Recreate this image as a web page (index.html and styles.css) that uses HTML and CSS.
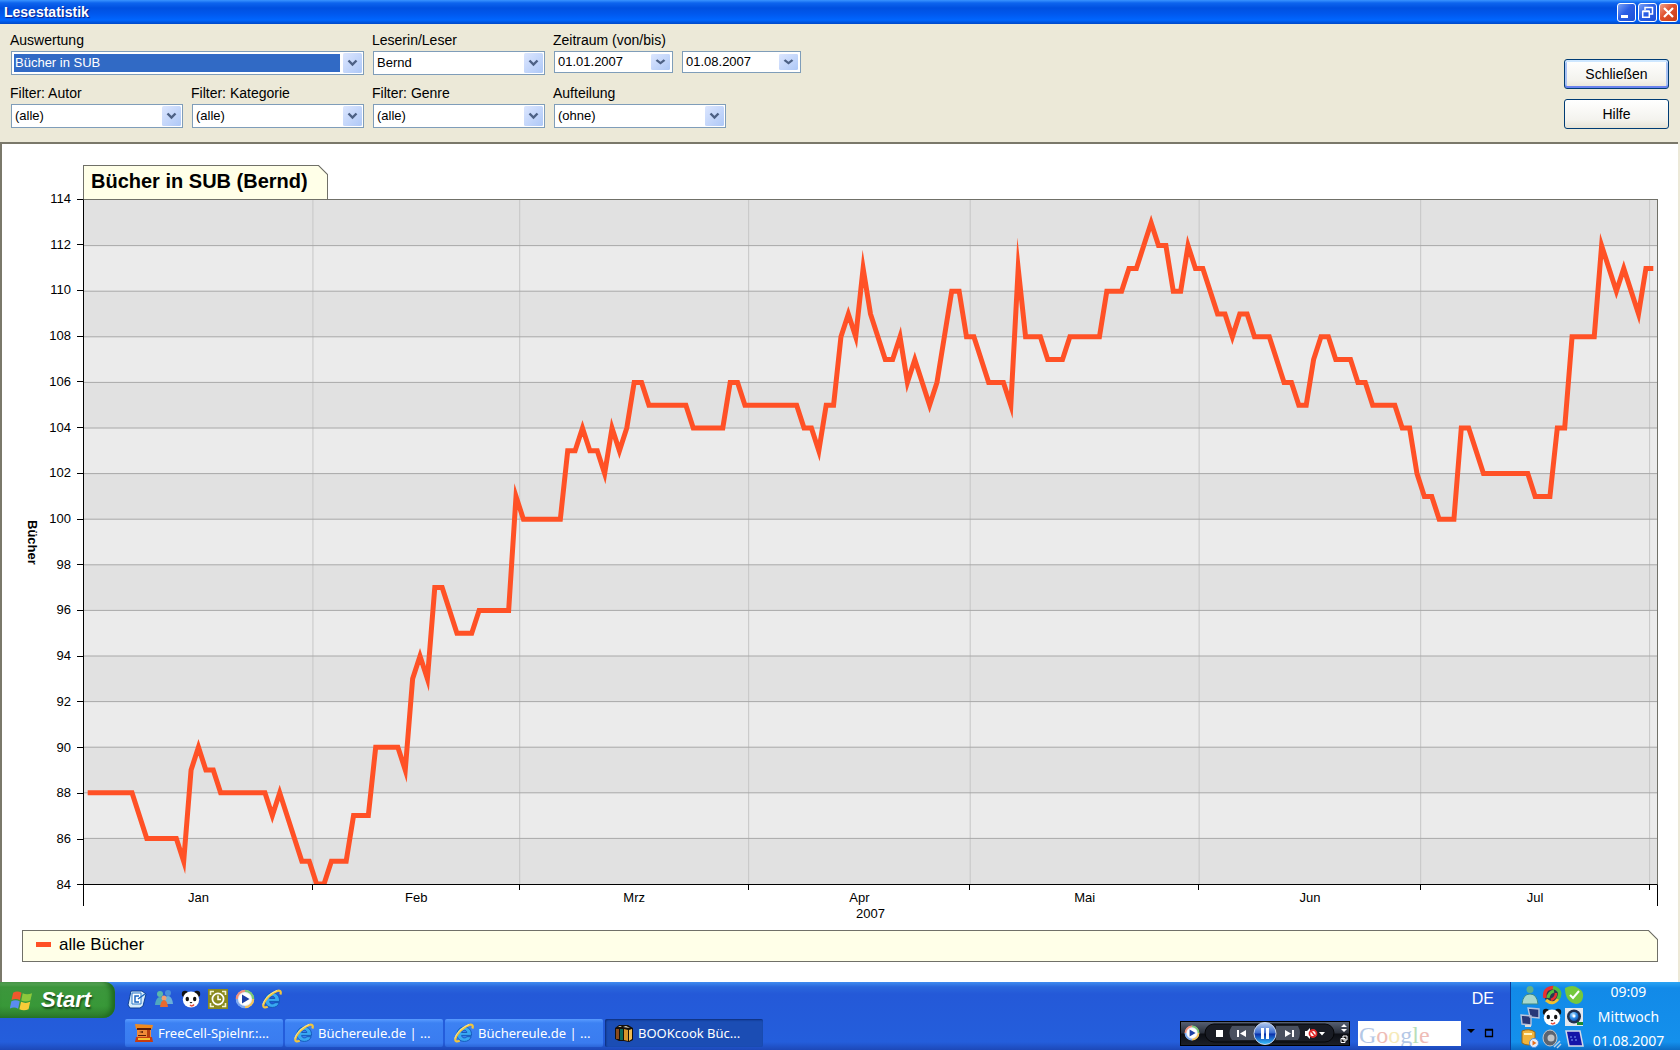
FILE: index.html
```html
<!DOCTYPE html>
<html lang="de">
<head>
<meta charset="utf-8">
<title>Lesestatistik</title>
<link rel="stylesheet" href="styles.css">
</head>
<body>
<svg class="defs" width="0" height="0" aria-hidden="true">
  <defs>
    <radialGradient id="blueBall" cx=".4" cy=".3" r=".8"><stop offset="0" stop-color="#bfe6ff"/><stop offset=".5" stop-color="#2f8fe8"/><stop offset="1" stop-color="#0a3f9c"/></radialGradient>
    <linearGradient id="pauseBall" x1="0" y1="0" x2="0" y2="1"><stop offset="0" stop-color="#b4ccf0"/><stop offset=".48" stop-color="#3b6cd0"/><stop offset=".52" stop-color="#0b2fa8"/><stop offset="1" stop-color="#38c4ff"/></linearGradient>
    <symbol id="ie" viewBox="0 0 20 20">
      <path d="M17.500 12.400H7.600c.3 1.700 1.300 2.500 2.800 2.500 1.200 0 2-.4 2.500-1.200h4.300c-1 3-3.500 4.700-6.800 4.700-4.400 0-7.400-2.800-7.400-7.100 0-4.300 3-7.300 7.300-7.300 4.700 0 7.400 3.200 7.200 8.400zM7.600 9.500h5.300c-.2-1.400-1.200-2.200-2.600-2.200s-2.400.8-2.700 2.200z" fill="#39a9f2" stroke="#0d4fae" stroke-width=".8"/>
      <path d="M18.300 5.500C19.600 2.300 18 .8 14.500 2.200 8.500 4.600 2.500 11 1.400 15.500c-.7 3 1.300 3.600 4.300 2.200" fill="none" stroke="#f2c53d" stroke-width="2.200"/>
      <path d="M15 1.600C8.500 3.600 1.800 10.400.8 15.500" fill="none" stroke="#fff3b0" stroke-width=".8"/>
    </symbol>
    <symbol id="panda" viewBox="0 0 20 20">
      <circle cx="4" cy="5" r="3.200" fill="#111"/><circle cx="16" cy="5" r="3.200" fill="#111"/>
      <ellipse cx="10" cy="10.500" rx="8.200" ry="8" fill="#fff"/>
      <ellipse cx="6.300" cy="10" rx="1.700" ry="2.200" fill="#111"/><ellipse cx="13.700" cy="10" rx="1.700" ry="2.200" fill="#111"/>
      <path d="M8.500 13h3l-1.500 1.500z" fill="#111"/><path d="M9 16q2 2 4-.5" stroke="#e84a3a" stroke-width="1.500" fill="none"/>
    </symbol>
    <symbol id="wmp" viewBox="0 0 20 20">
      <circle cx="10" cy="10" r="9" fill="#e8eef8"/>
      <path d="M10 1.800A8.200 8.200 0 0 0 1.800 10" stroke="#f0907a" stroke-width="2.200" fill="none"/>
      <path d="M10 1.800A8.200 8.200 0 0 1 18.200 10" stroke="#7cc874" stroke-width="2.200" fill="none"/>
      <path d="M18.200 10A8.200 8.200 0 0 1 10 18.200" stroke="#f3c35a" stroke-width="2.200" fill="none"/>
      <path d="M10 18.200A8.200 8.200 0 0 1 1.800 10" stroke="#7ca8ee" stroke-width="2.200" fill="none"/>
      <circle cx="10" cy="10" r="6" fill="#fff"/><path d="M7 5.500l7.500 4.500L7 14.500z" fill="#1c3fa4"/>
    </symbol>
  </defs>
</svg>

<header class="titlebar">
  <h1 class="titlebar-text">Lesestatistik</h1>
  <div class="window-buttons">
    <button class="winbtn" type="button" aria-label="Minimieren"><svg viewBox="0 0 17 17"><path d="M3 11h7v3H3z" fill="#fff"/></svg></button>
    <button class="winbtn" type="button" aria-label="Wiederherstellen"><svg viewBox="0 0 17 17"><path d="M6 6V3.500h7.500V10H11M5.500 3.500h8.500" fill="none" stroke="#fff" stroke-width="1.500"/><path d="M3.700 7.500h6.600v5.800H3.700zM3.500 7h7" fill="none" stroke="#fff" stroke-width="1.500"/></svg></button>
    <button class="winbtn winbtn-close" type="button" aria-label="Fenster schließen"><svg viewBox="0 0 17 17"><path d="M4 4l9 9M13 4l-9 9" stroke="#fff" stroke-width="2.200"/></svg></button>
  </div>
</header>

<form class="toolbar">
  <div class="filters">
    <div class="field field-wide">
      <label for="auswertung">Auswertung</label>
      <select id="auswertung" class="combo combo-active"><option>Bücher in SUB</option></select>
    </div>
    <div class="field">
      <label for="leser">Leserin/Leser</label>
      <select id="leser" class="combo"><option>Bernd</option></select>
    </div>
    <div class="field field-range">
      <label for="von">Zeitraum (von/bis)</label>
      <div class="range">
        <div class="date"><input id="von" type="text" value="01.01.2007"><button class="date-drop" type="button" aria-label="Kalender von"></button></div>
        <div class="date"><input id="bis" type="text" value="01.08.2007" aria-label="Zeitraum bis"><button class="date-drop" type="button" aria-label="Kalender bis"></button></div>
      </div>
    </div>
    <div class="field">
      <label for="autor">Filter: Autor</label>
      <select id="autor" class="combo"><option>(alle)</option></select>
    </div>
    <div class="field">
      <label for="kategorie">Filter: Kategorie</label>
      <select id="kategorie" class="combo"><option>(alle)</option></select>
    </div>
    <div class="field">
      <label for="genre">Filter: Genre</label>
      <select id="genre" class="combo"><option>(alle)</option></select>
    </div>
    <div class="field">
      <label for="aufteilung">Aufteilung</label>
      <select id="aufteilung" class="combo"><option>(ohne)</option></select>
    </div>
  </div>
  <div class="actions">
    <button class="btn btn-default" type="button">Schließen</button>
    <button class="btn" type="button">Hilfe</button>
  </div>
</form>

<main class="panel">
  <div class="chart">
    <h2 class="chart-title">Bücher in SUB (Bernd)</h2>
    <div class="y-title"><span>Bücher</span></div>
    <div class="y-axis">
      <span>114</span><span>112</span><span>110</span><span>108</span><span>106</span><span>104</span><span>102</span><span>100</span><span>98</span><span>96</span><span>94</span><span>92</span><span>90</span><span>88</span><span>86</span><span>84</span>
    </div>
    <div class="plot">
      <!-- one unit per day across, one unit per book down from 114 -->
      <svg class="plot-svg" viewBox="0 0 213 30" preserveAspectRatio="none">
        <path fill="#e1e1e1" d="M0 0h213v2H0zM0 4h213v2H0zM0 8h213v2H0zM0 12h213v2H0zM0 16h213v2H0zM0 20h213v2H0zM0 24h213v2H0zM0 28h213v2H0z"/>
        <path class="grid-v" d="M31 0v30M59 0v30M90 0v30M120 0v30M151 0v30M181 0v30M212 0v30"/>
        <path class="grid-h" d="M0 2h213M0 4h213M0 6h213M0 8h213M0 10h213M0 12h213M0 14h213M0 16h213M0 18h213M0 20h213M0 22h213M0 24h213M0 26h213M0 28h213"/>
        <polyline class="series" points="0.5,26 6.5,26 8.5,28 12.5,28 13.5,29 14.5,25 15.5,24 16.5,25 17.5,25 18.5,26 24.5,26 25.5,27 26.5,26 29.5,29 30.5,29 31.5,30 32.5,30 33.5,29 35.5,29 36.5,27 38.5,27 39.5,24 42.5,24 43.5,25 44.5,21 45.5,20 46.5,21 47.5,17 48.5,17 50.5,19 52.5,19 53.5,18 57.5,18 58.5,13 59.5,14 64.5,14 65.5,11 66.5,11 67.5,10 68.5,11 69.5,11 70.5,12 71.5,10 72.5,11 73.5,10 74.5,8 75.5,8 76.5,9 81.5,9 82.5,10 86.5,10 87.5,8 88.5,8 89.5,9 96.5,9 97.5,10 98.5,10 99.5,11 100.5,9 101.5,9 102.5,6 103.5,5 104.5,6 105.5,3 106.5,5 108.5,7 109.5,7 110.5,6 111.5,8 112.5,7 114.5,9 115.5,8 117.5,4 118.5,4 119.5,6 120.5,6 122.5,8 124.5,8 125.5,9 126.5,3 127.5,6 129.5,6 130.5,7 132.5,7 133.5,6 137.5,6 138.5,4 140.5,4 141.5,3 142.5,3 144.5,1 145.5,2 146.5,2 147.5,4 148.5,4 149.5,2 150.5,3 151.5,3 153.5,5 154.5,5 155.5,6 156.5,5 157.5,5 158.5,6 160.5,6 162.5,8 163.5,8 164.5,9 165.5,9 166.5,7 167.5,6 168.5,6 169.5,7 171.5,7 172.5,8 173.5,8 174.5,9 177.5,9 178.5,10 179.5,10 180.5,12 181.5,13 182.5,13 183.5,14 185.5,14 186.5,10 187.5,10 189.5,12 195.5,12 196.5,13 198.5,13 199.5,10 200.5,10 201.5,6 204.5,6 205.5,2 207.5,4 208.5,3 210.5,5 211.5,3 212.5,3"/>
      </svg>
    </div>
    <div class="x-axis">
      <div class="months"><span>Jan</span><span>Feb</span><span>Mrz</span><span>Apr</span><span>Mai</span><span>Jun</span><span>Jul</span><span></span></div>
      <div class="year">2007</div>
    </div>
    <div class="legend"><span class="legend-key"></span>alle Bücher</div>
  </div>
</main>

<footer class="taskbar">
  <button class="start" type="button">
    <svg viewBox="0 0 24 24"><path d="M3 4.500q4-2.500 8 0L9.500 11.500q-4-2-8 0z" fill="#f0582c"/><path d="M12.200 5q4 2.200 9 0l-1.600 7q-4.500 2-8.800 0z" fill="#8cc83c"/><path d="M1.300 12.800q4-2 8 0l-1.500 7q-4-2.200-8 0z" fill="#5a8cf0"/><path d="M10.600 13.300q4.500 2 8.800 0l-1.600 7q-4.400 2-8.800 0z" fill="#f8cc38"/></svg>
    <span>Start</span>
  </button>
  <div class="bands">
    <nav class="quick" aria-label="Schnellstart">
      <a href="#" aria-label="Desktop"><svg viewBox="0 0 20 20"><path d="M4 2h11l4 3-3 12-3 2H3l-2-3z" fill="#d8ecfa" stroke="#0d3f94"/><path d="M5 4h9v11H5z" fill="#fff" stroke="#2b78c8"/><path d="M12 7H8v6h4M11 10l7-5" fill="none" stroke="#1a66c0" stroke-width="1.500"/></svg></a>
      <a href="#" aria-label="Messenger"><svg viewBox="0 0 20 20"><circle cx="6" cy="5" r="3" fill="#5cb8a8"/><circle cx="14" cy="4" r="3" fill="#4a90d8"/><path d="M1 16q1-8 5-8t5 8z" fill="#4fa8c0"/><path d="M9 15q1-8 5-8t5 8z" fill="#6ab0d8"/><circle cx="10" cy="9" r="2.500" fill="#f0a070"/><path d="M6 18q1-7 4-7t4 7z" fill="#e86a30"/></svg></a>
      <a href="#" aria-label="Panda"><svg><use href="#panda"/></svg></a>
      <a href="#" aria-label="Uhr"><svg viewBox="0 0 20 20"><path d="M0 0h20v20H0z" fill="#8a8a1e"/><path d="M2.500 6V2.500H6M14 2.500h3.500V6M17.500 14v3.500H14M6 17.500H2.500V14" fill="none" stroke="#f4f4d0" stroke-width="1.600"/><circle cx="10" cy="10" r="5.600" fill="none" stroke="#fff" stroke-width="1.700"/><path d="M10 6.500V10.500h3" fill="none" stroke="#fff" stroke-width="1.500"/></svg></a>
      <a href="#" aria-label="Media Player"><svg><use href="#wmp"/></svg></a>
      <a href="#" aria-label="Internet Explorer"><svg><use href="#ie"/></svg></a>
      <span class="lang">DE</span>
    </nav>
    <div class="tasks">
      <button class="task" type="button"><svg viewBox="0 0 20 20"><path d="M1 1l18 1-1 4H2z" fill="#f08a20"/><path d="M3 6h14v8H3z" fill="#f08a38"/><path d="M3 5h14v2H3zM5 9l4-1v2zM4 12h8v1H4z" fill="#5a1c08"/><path d="M13 7h3v7h-3z" fill="#b43c10"/><path d="M2 14h16l1 5H1z" fill="#c83c10"/><path d="M4 15h12v2H4z" fill="#f6c030"/></svg><span>FreeCell-Spielnr.:...</span></button>
      <button class="task" type="button"><svg><use href="#ie"/></svg><span>Büchereule.de | ...</span></button>
      <button class="task" type="button"><svg><use href="#ie"/></svg><span>Büchereule.de | ...</span></button>
      <button class="task task-active" type="button"><svg viewBox="0 0 20 20"><path d="M1 5l4-3h9l5 3v12l-4 2-5-1-5 0-4-2z" fill="#15100a"/><path d="M2 6h3v10H2z" fill="#8a4a1c"/><path d="M6 6h3v11H6z" fill="#0d6a5a"/><path d="M10 6l4 1v11l-4-1z" fill="#d8962c"/><path d="M15 7l3-1v10l-3 2z" fill="#f0bc50"/><path d="M4 4l2-1 2 1zM9 4l3-1 4 2z" fill="#e8e0d0"/></svg><span>BOOKcook Büc...</span></button>
      <div class="player">
        <svg viewBox="0 0 170 25" role="img" aria-label="Windows Media Player">
          <linearGradient id="pl" x1="0" y1="0" x2="0" y2="1"><stop offset="0" stop-color="#566072"/><stop offset=".48" stop-color="#2a2f3a"/><stop offset=".52" stop-color="#0c0e14"/><stop offset="1" stop-color="#1c2028"/></linearGradient>
          <path d="M0 0h170v25H0z" fill="#000"/><path d="M1 1h168v23H1z" fill="url(#pl)"/>
          <svg x="4" y="4" width="16" height="16"><use href="#wmp"/></svg>
          <rect x="25" y="3" width="129" height="18" rx="9" fill="#191c24" stroke="#050608"/>
          <path d="M52 5h23v14H52q-5-7 0-14zM96 5h22q4 7 0 14H96z" fill="#4a5160"/>
          <path d="M36 9h7v7h-7zM57 9h2v7h-2zM66 9v7l-6-3.500zM105 9v7l6-3.500zM112 9h2v7h-2z" fill="#fff"/>
          <circle cx="85" cy="12.500" r="11" fill="url(#pauseBall)" stroke="#c8d4ec"/>
          <path d="M81 7h3v11h-3zM86 7h3v11h-3z" fill="#fff"/>
          <path d="M125 10h2l3-3v11l-3-3h-2z" fill="#fff"/><circle cx="133" cy="12.500" r="3.500" fill="#fff" stroke="#e02828" stroke-width="1.800"/><path d="M131 10l4 5" stroke="#e02828" stroke-width="1.500"/>
          <path d="M139 11h6l-3 3.500zM161 6l3-3 3 3zM161 8l3 3 3-3z" fill="#fff"/>
          <path d="M163 19v-4h4v4zM161 21.500v-4h4v4z" fill="#111" stroke="#fff"/>
        </svg>
      </div>
      <div class="search">
        <label class="google" for="google"><i class="g-blue">G</i><i class="g-red">o</i><i class="g-yellow">o</i><i class="g-blue">g</i><i class="g-green">l</i><i class="g-red">e</i></label>
        <input id="google" type="text">
      </div>
      <button class="mini" type="button" aria-label="Suchoptionen"><svg viewBox="0 0 10 10"><path d="M1 1h8L5 5z"/></svg></button>
      <button class="mini" type="button" aria-label="Fenster"><svg viewBox="0 0 10 10"><path d="M1.500 2h7v6.500h-7zM1 1.500h8" fill="none" stroke="#000" stroke-width="1.300"/></svg></button>
    </div>
  </div>
  <div class="tray">
    <div class="tray-icons">
      <svg viewBox="0 0 20 20"><circle cx="10" cy="4.500" r="3.500" fill="#5fb08a"/><path d="M2 19q1-10 8-10t8 10z" fill="#a8d8cc" stroke="#3a8a88"/></svg>
      <svg viewBox="0 0 20 20"><circle cx="10" cy="10" r="8" fill="#2a3a50"/><path d="M3 13Q1 3 12 2.500" stroke="#e83030" stroke-width="3.500" fill="none"/><path d="M11 2.500Q21 5 16 14" stroke="#50c040" stroke-width="3.500" fill="none"/><path d="M4 15q7 6 12-1" stroke="#f0c030" stroke-width="3" fill="none"/><path d="M6 13Q7 7 12 6" stroke="#50c040" stroke-width="3" fill="none"/><path d="M9 15q5-2 5-7" stroke="#e83030" stroke-width="2.500" fill="none"/></svg>
      <svg viewBox="0 0 20 20"><path d="M1 3q8-4 13 0 6 3 5 9-1 7-7 7Q1 17 1 3z" fill="#74c83c"/><path d="M6 10l3 3 6-7" fill="none" stroke="#fff" stroke-width="2"/></svg>
      <svg viewBox="0 0 20 20"><path d="M8 1l11 1v9l-9-1zM1 8l10 1v9L2 17z" fill="#283878" stroke="#b8c4dc" stroke-width="1.400"/><path d="M5 19h6" stroke="#ddd" stroke-width="2"/></svg>
      <svg><use href="#panda"/></svg>
      <svg viewBox="0 0 20 20"><path d="M1 1h18v18H1z" fill="#e4e8ee"/><circle cx="10" cy="9.500" r="7" fill="#203050"/><circle cx="10" cy="9.500" r="4.500" fill="url(#blueBall)"/><circle cx="10" cy="9" r="1.500" fill="#fff"/><path d="M13 15h6v3h-6z" fill="#1c8a30"/></svg>
      <svg viewBox="0 0 20 20"><path d="M2 2q7-3 13 1v11q-7 4-13 0z" fill="#f0b43c" stroke="#9a6818"/><path d="M4 5h8" stroke="#fff4c0" stroke-width="2"/><circle cx="14" cy="14" r="4.500" fill="#e8eef8" stroke="#4c8ee8"/><path d="M12.500 11.500l4 2.500-4 2.500z" fill="#e87020"/></svg>
      <svg viewBox="0 0 20 20"><ellipse cx="8" cy="9" rx="7" ry="8" fill="#5c6470" stroke="#c4c8cc"/><circle cx="9" cy="9" r="3.500" fill="#c0c4c8"/><path d="M12 18l6-6M15 19l4-4" stroke="#b8d0e8" stroke-width="1.500"/></svg>
      <svg viewBox="0 0 20 20"><path d="M2 2h14l3 15H5z" fill="#1414a8" stroke="#d4d8e8" stroke-width="1.500"/><path d="M6 8h8M7 11h8" stroke="#7ca0f8" stroke-dasharray="2 2"/></svg>
    </div>
    <div class="clock"><span>09:09</span><span>Mittwoch</span><span>01.08.2007</span></div>
  </div>
</footer>
</body>
</html>
```
FILE: styles.css
```css
:root {
  --face: #ece9d8;
  --cream: #ffffe8;
  --line: #707068;
  --drop: url("data:image/svg+xml,%3Csvg xmlns='http://www.w3.org/2000/svg' viewBox='0 0 19 20' preserveAspectRatio='none'%3E%3ClinearGradient id='g' x2='1' y2='1'%3E%3Cstop stop-color='%23dce6fe'/%3E%3Cstop offset='1' stop-color='%23aec8f7'/%3E%3C/linearGradient%3E%3Crect width='19' height='20' rx='1.500' fill='url(%23g)'/%3E%3Cpath d='M5.500 7.500l4 4 4-4' fill='none' stroke='%234d6185' stroke-width='2.400'/%3E%3C/svg%3E");
}

* { box-sizing: border-box; }

body {
  margin: 0;
  min-height: 100vh;
  display: flex;
  flex-direction: column;
  background: var(--face);
  color: #000;
  font: 14px/18px "Liberation Sans", Arial, sans-serif;
}

button, input, select { font: inherit; color: inherit; }
button { cursor: pointer; }
svg { display: block; }
.defs { position: absolute; }

/* Title bar */
.titlebar {
  display: flex;
  align-items: center;
  justify-content: space-between;
  height: 24px;
  padding: 0 2px 0 4px;
  background: linear-gradient(#3a94ff 0, #0d64ee 3px, #0050e0 8px, #0058ee 14px, #0066ff 20px, #0048c8 24px);
}
.titlebar-text {
  margin: 0;
  font-size: 14px;
  line-height: 18px;
  color: #fff;
  text-shadow: 1px 1px 1px #0a1883;
}
.window-buttons { display: flex; gap: 2px; }
.winbtn {
  width: 19px;
  height: 19px;
  padding: 0;
  border: 1px solid #fff;
  border-radius: 3px;
  background: linear-gradient(135deg, #7ba2f6, #2b5fe6 45%, #1d4fd6);
}
.winbtn-close { background: linear-gradient(135deg, #f0a088, #e0502c 45%, #c83c14); }

/* Filter area */
.toolbar {
  display: flex;
  justify-content: space-between;
  padding: 7px 11px 13px;
}
.filters {
  display: grid;
  grid-template-columns: repeat(4, 172px) auto;
  gap: 8px 9px;
}
.field { display: flex; flex-direction: column; gap: 2px; height: 44px; }
.field label { margin-left: -1px; }
.field-wide { grid-column: span 2; }
.field-range { grid-column: span 2; }
.combo {
  appearance: none;
  height: 24px;
  padding: 0 24px 0 3px;
  border: 1px solid #7f9db9;
  border-radius: 0;
  background: var(--drop) right 1px center / 19px 20px no-repeat, #fff;
  font-size: 13px;
}
.combo-active {
  color: #fff;
  background:
    var(--drop) right 1px center / 19px 20px no-repeat,
    linear-gradient(#316ac5, #316ac5) 2px 2px / calc(100% - 25px) calc(100% - 4px) no-repeat,
    #fff;
}
.range { display: flex; gap: 9px; }
.date {
  display: flex;
  align-items: center;
  width: 119px;
  height: 22px;
  padding-right: 2px;
  border: 1px solid #7f9db9;
  background: #fff;
}
.date input {
  flex: 1;
  min-width: 0;
  padding: 0 0 0 3px;
  border: 0;
  background: none;
  font-size: 13px;
}
.date-drop {
  width: 19px;
  height: 16px;
  padding: 0;
  border: 0;
  background: var(--drop) center / 19px 16px no-repeat;
}

.actions { display: flex; flex-direction: column; gap: 10px; padding-top: 28px; }
.btn {
  width: 105px;
  height: 30px;
  padding: 0;
  border: 1px solid #003c74;
  border-radius: 3px;
  background: linear-gradient(#fff, #f4f3ee 70%, #e6e3d6);
}
.btn-default { box-shadow: inset 0 2px #cee7ff, inset 0 -2px #6982ee, inset 2px 0 #a9c2f4, inset -2px 0 #a9c2f4; }

/* Chart */
.panel {
  flex: 1;
  display: flex;
  margin-right: 2px;
  padding: 21px 20px 20px;
  border: solid #7a786a;
  border-width: 2px 0 0 2px;
  background: #fff;
}
.chart {
  flex: 1;
  display: grid;
  grid-template-columns: 20px 41px 1fr;
  grid-template-rows: 34px 1fr 45px 32px;
  font-size: 13px;
  line-height: 16px;
}
.chart-title {
  position: relative;
  grid-column: 3;
  justify-self: start;
  width: 245px;
  margin: 0;
  padding: 0 7px;
  border: 1px solid var(--line);
  border-bottom: 0;
  background: var(--cream);
  font-size: 20px;
  line-height: 30px;
  white-space: nowrap;
}
.chart-title::after,
.legend::after {
  content: "";
  position: absolute;
  top: -1px;
  right: -1px;
  width: 10px;
  height: 10px;
  background: linear-gradient(to top right, var(--cream) calc(50% - 1px), var(--line) 50%, #fff calc(50% + 1px));
}
.y-title {
  display: flex;
  align-items: center;
  justify-content: center;
  font-weight: bold;
  writing-mode: vertical-rl;
}
.y-axis {
  display: flex;
  flex-direction: column;
  justify-content: space-between;
  margin: -8px 0;
}
.y-axis span { display: flex; align-items: center; justify-content: flex-end; gap: 6px; }
.y-axis span::after { content: ""; width: 6px; height: 1px; background: #000; }
.plot {
  display: grid;
  border: 1px solid var(--line);
  border-left-color: #000;
  border-bottom-color: #000;
  background: #ebebeb;
}
.plot-svg { width: 100%; height: 100%; min-height: 0; overflow: hidden; contain: size; }
.grid-h, .grid-v { fill: none; stroke: #a8a8a8; vector-effect: non-scaling-stroke; shape-rendering: crispEdges; }
.grid-v { stroke: #c6c6c6; }
.series {
  fill: none;
  stroke: #ff5126;
  stroke-width: 5px;
  stroke-miterlimit: 14;
  vector-effect: non-scaling-stroke;
}
.x-axis { grid-column: 3; height: 21px; border: solid #000; border-width: 0 1px; }
.months {
  display: grid;
  grid-template-columns: 31fr 28fr 31fr 30fr 31fr 30fr 31fr 1fr;
  text-align: center;
}
.months span {
  padding-top: 5px;
  background: linear-gradient(#000, #000) right top / 1px 5px no-repeat;
}
.months span:last-child { background: none; min-width: 0; }
.year { text-align: center; }
.legend {
  position: relative;
  grid-column: 1 / -1;
  display: flex;
  align-items: center;
  gap: 8px;
  padding: 0 13px 3px;
  border: 1px solid var(--line);
  background: var(--cream);
  font-size: 17px;
}
.legend-key { width: 15px; height: 5px; background: #ff5126; }

/* Taskbar */
.taskbar {
  display: flex;
  height: 68px;
  background: linear-gradient(#3f8cf0 0, #2a66dc 5px, #2459d8 12px, #245edc 60px, #1d48b8 68px);
  color: #fff;
  font-family: "Noto Sans", "Open Sans", sans-serif;
}
.start {
  display: flex;
  align-items: center;
  gap: 6px;
  width: 115px;
  height: 36px;
  padding: 0 0 0 10px;
  border: 0;
  border-radius: 0 10px 12px 0;
  background: linear-gradient(#6cb86c 0, #3c963c 5px, #389838 24px, #2c7a2c 36px);
  box-shadow: inset -4px 0 5px #1f6a1f;
  font: italic bold 22px/30px "Liberation Sans", Arial, sans-serif;
  text-shadow: 1px 2px 2px #1a4a1a;
}
.start svg { width: 25px; height: 25px; }
.bands { flex: 1; display: flex; flex-direction: column; min-width: 0; padding-left: 10px; }
.quick { display: flex; align-items: center; gap: 7px; height: 34px; padding-left: 2px; }
.quick svg { width: 20px; height: 20px; }
.lang {
  margin-left: auto;
  margin-right: 16px;
  font: 16px/20px "Liberation Sans", Arial, sans-serif;
}
.tasks { display: flex; align-items: center; gap: 2px; height: 34px; padding: 2px 13px 2px 0; }
.task {
  display: flex;
  align-items: center;
  gap: 4px;
  width: 158px;
  height: 28px;
  padding: 0 9px;
  border: 0;
  border-radius: 2px;
  background: linear-gradient(#5a9cff, #3c81f3 4px, #3a7cf0 24px, #2c66d8);
  font-size: 13px;
  white-space: nowrap;
}
.task svg { flex: none; width: 20px; height: 20px; }
.task-active { background: #1b4db4; box-shadow: inset 1px 1px 2px #0c2c78; }
.player { width: 170px; margin-left: auto; margin-right: 6px; }
.search {
  display: flex;
  align-items: center;
  width: 103px;
  height: 25px;
  overflow: hidden;
  background: #fff;
}
.search input { flex: 1; min-width: 0; padding: 0; border: 0; background: none; color: #000; }
.google { padding: 4px 0 0 1px; font: 24px/25px "Liberation Serif", "Times New Roman", serif; }
.google i { font-style: normal; }
.g-blue { color: #b4c8e6; }
.g-red { color: #eebcb6; }
.g-yellow { color: #f6eab8; }
.g-green { color: #b8deb8; }
.mini { width: 16px; height: 20px; padding: 3px; border: 0; background: none; }
.mini svg { width: 10px; height: 10px; }
.tray {
  display: flex;
  width: 170px;
  padding: 1px 0 0 9px;
  border-left: 1px solid #0c3c9c;
  background: linear-gradient(#2aa4f4 0, #128ae8 6px, #1490ec 60px, #0c6cc4 68px);
}
.tray-icons { display: grid; grid-template-columns: repeat(3, 20px); grid-auto-rows: 20px; gap: 2px; align-content: center; }
.tray-icons svg { width: 20px; height: 20px; }
.clock {
  flex: 1;
  display: flex;
  flex-direction: column;
  align-items: center;
  justify-content: space-between;
  padding-right: 7px;
  overflow: hidden;
}
```
